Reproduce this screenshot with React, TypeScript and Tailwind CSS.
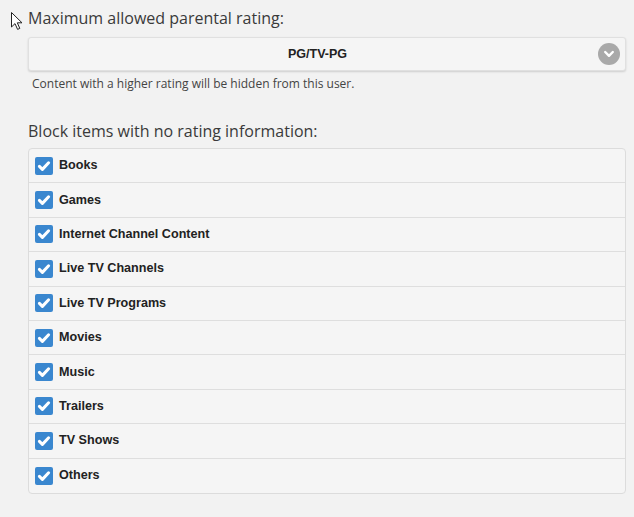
const items = [
  "Books",
  "Games",
  "Internet Channel Content",
  "Live TV Channels",
  "Live TV Programs",
  "Movies",
  "Music",
  "Trailers",
  "TV Shows",
  "Others",
];

function Cursor() {
  return (
    <svg className="absolute left-[10px] top-[11px]" width="14" height="20" viewBox="0 0 14 20">
      <path
        d="M1.5 1.5 L1.5 16 L5 12.6 L7.6 18.4 L9.8 17.4 L7.3 11.8 L12 11.8 Z"
        fill="#fff"
        stroke="#222"
        strokeWidth="1"
        strokeLinejoin="miter"
      />
    </svg>
  );
}

function Check() {
  return (
    <span className="flex items-center justify-center w-[18px] h-[18px] rounded-[2px] bg-[#3a87cf] shrink-0">
      <svg width="14" height="14" viewBox="0 0 14 14">
        <path d="M2.4 7.4 L5.4 10.4 L11.6 3.8" fill="none" stroke="#fff" strokeWidth="3" strokeLinecap="round" strokeLinejoin="round" />
      </svg>
    </span>
  );
}

export default function App() {
  return (
    <div className="relative w-[634px] h-[517px] bg-[#f2f2f2] font-['Open_Sans',sans-serif] text-[#333] overflow-hidden">
      <Cursor />
      <div className="pl-[28px] pr-[8px] pt-[6px]">
        <div className="text-[16px] leading-[24px] text-[#3a3a3a]">Maximum allowed parental rating:</div>
        <div className="mt-[7px] h-[34px] flex items-center relative bg-[#f5f5f5] border border-[#e0e0e0] rounded-[3px] shadow-[0_1px_2px_rgba(0,0,0,0.15)] pr-[19px]">
          <div className="flex-1 text-center font-['Liberation_Sans',Arial,sans-serif] font-bold text-[12.5px] text-[#222]">
            PG/TV-PG
          </div>
          <span className="absolute right-[5px] top-[5px] w-[22px] h-[22px] rounded-full bg-[#a9a9a9] flex items-center justify-center">
            <svg width="12" height="12" viewBox="0 0 12 12">
              <path d="M2.2 4 L6 7.8 L9.8 4" fill="none" stroke="#fff" strokeWidth="2.4" strokeLinecap="round" strokeLinejoin="round" />
            </svg>
          </span>
        </div>
        <div className="mt-[5px] pl-[4px] text-[12px] leading-[16px] text-[#444]">
          Content with a higher rating will be hidden from this user.
        </div>
        <div className="mt-[27px] text-[16px] leading-[24px] text-[#3a3a3a]">Block items with no rating information:</div>
        <div className="mt-[5px] bg-[#f5f5f5] border border-[#dcdcdc] rounded-[4px]">
          {items.map((label, i) => (
            <div
              key={label}
              className={
                "h-[34.4px] flex items-center gap-[6px] pl-[6px] " +
                (i < items.length - 1 ? "border-b border-[#dedede]" : "")
              }
            >
              <Check />
              <span className="font-['Liberation_Sans',Arial,sans-serif] font-bold text-[12.6px] text-[#222]">{label}</span>
            </div>
          ))}
        </div>
      </div>
    </div>
  );
}
